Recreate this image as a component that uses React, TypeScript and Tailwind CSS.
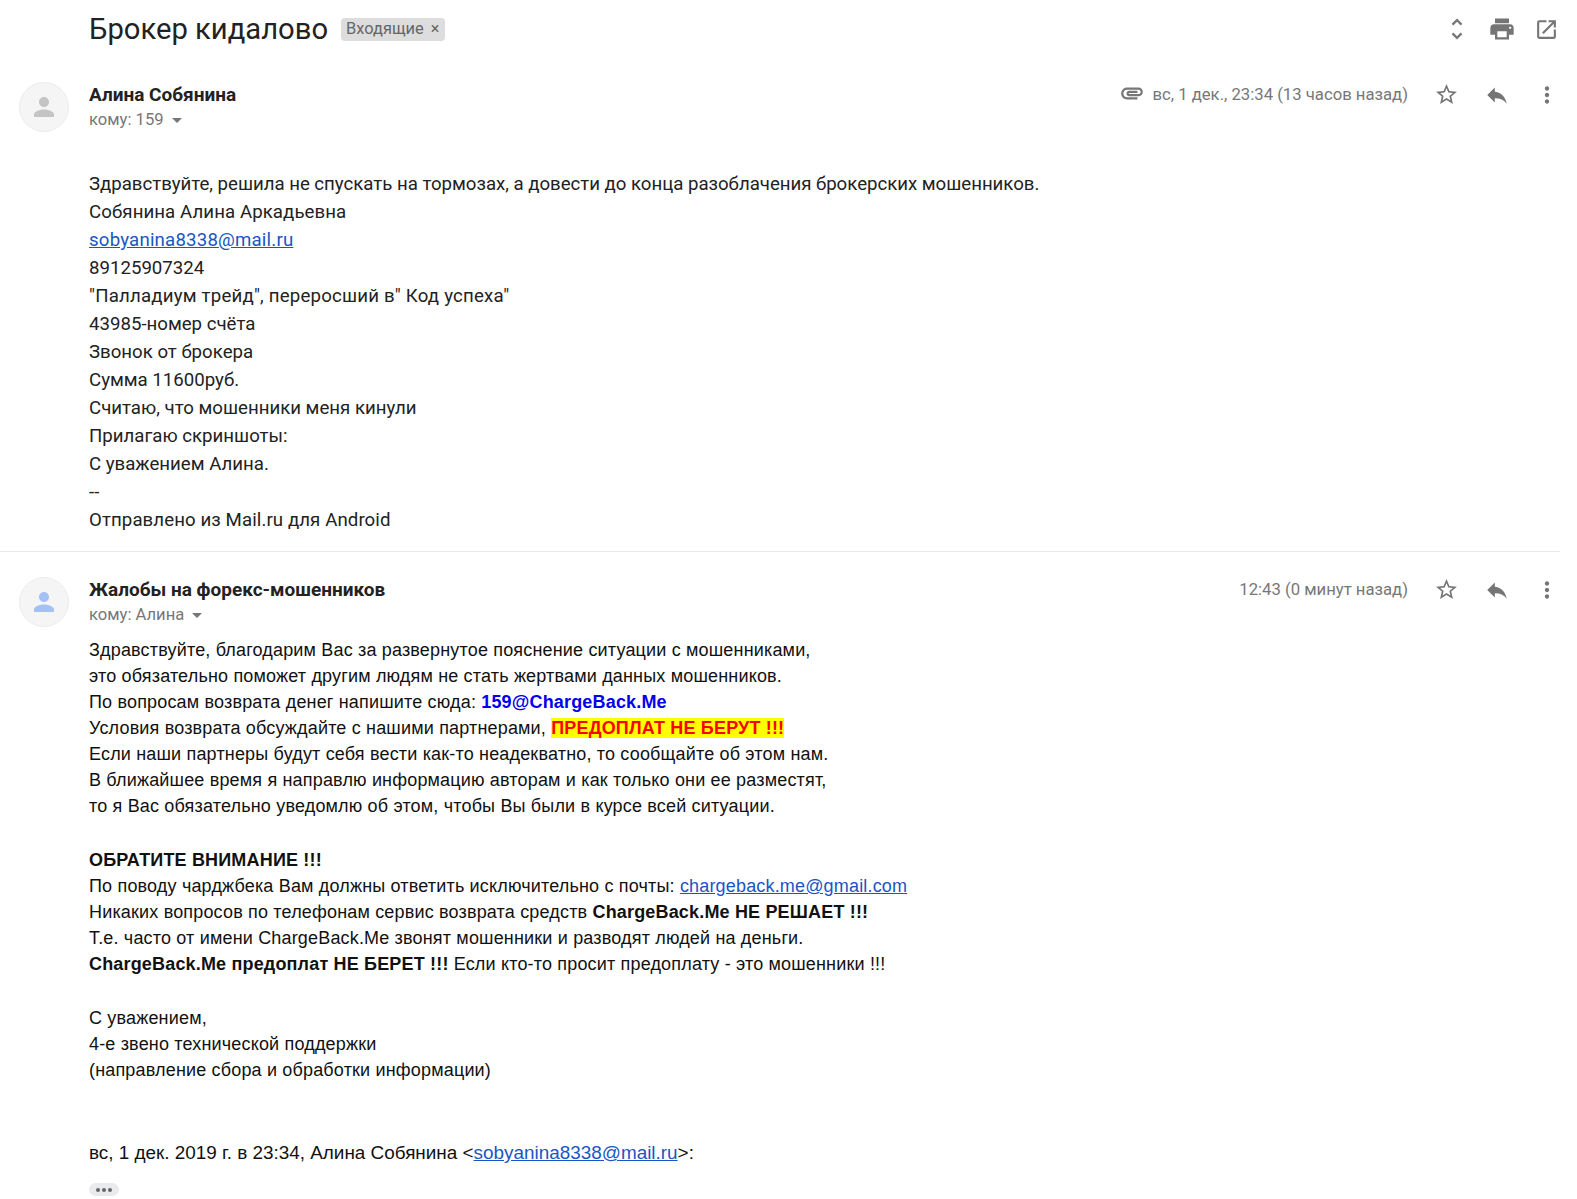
import React from "react";
import {
  MdArrowDropDown,
  MdAttachment,
  MdMoreVert,
  MdOpenInNew,
  MdPerson,
  MdPrint,
  MdReply,
  MdStarBorder,
  MdUnfoldMore,
} from "react-icons/md";

const roboto = "font-['Roboto',sans-serif]";
const arial = "font-['Liberation_Sans',Arial,sans-serif]";

type HeaderProps = {
  sender: string;
  to: string;
  time: string;
  avatarColor: string;
  attachment?: boolean;
};

const MessageHeader: React.FC<HeaderProps> = ({ sender, to, time, avatarColor, attachment }) => (
  <div className="flex h-[52px] items-start">
    <div className="ml-[19px] mr-[20px] flex h-[50px] w-[50px] items-center justify-center rounded-full border border-[#ececec] bg-[#f5f5f5]">
      <MdPerson className={`h-[30px] w-[30px] ${avatarColor}`} />
    </div>
    <div className="flex-1 pt-[1px]">
      <div className={`text-[19px] leading-[24px] font-bold text-[#222] ${roboto}`}>{sender}</div>
      <div className="mt-[1px] flex items-center text-[16.6px] leading-[24px] text-[#777]">
        <span>{to}</span>
        <MdArrowDropDown className="ml-[1px] h-[24px] w-[24px] text-[#777]" />
      </div>
    </div>
    <div className="flex h-[26px] items-center pr-[17px]">
      {attachment && <MdAttachment className="mr-[7px] mb-[5px] h-[26px] w-[26px] text-[#777]" />}
      <span className="text-[16.7px] text-[#777]">{time}</span>
      <MdStarBorder className="mb-[1px] ml-[26px] h-[25px] w-[25px] text-[#757575]" />
      <MdReply className="ml-[25px] h-[26px] w-[26px] text-[#757575]" />
      <MdMoreVert className="ml-[24px] h-[26px] w-[26px] text-[#757575]" />
    </div>
  </div>
);

const App: React.FC = () => {
  return (
    <div className={`h-[1199px] w-[1577px] overflow-hidden bg-white ${roboto}`}>
      {/* subject row */}
      <div className="flex h-[57px] items-center pt-[1px] pr-[18px] pl-[89px]">
        <h1 className="pt-[1px] text-[29.2px] font-normal text-[#222]">Брокер кидалово</h1>
        <span className="ml-[13px] flex h-[23px] items-center rounded-[4px] bg-[#ddd] px-[5px] text-[16.4px] text-[#666]">
          Входящие
          <span className="mr-[1px] ml-[7px] text-[16px]">×</span>
        </span>
        <div className="ml-auto flex items-center">
          <MdUnfoldMore className="h-[28px] w-[28px] text-[#777]" />
          <MdPrint className="ml-[17px] h-[28px] w-[28px] text-[#757575]" />
          <MdOpenInNew className="ml-[18px] h-[25px] w-[25px] text-[#757575]" />
        </div>
      </div>

      {/* first message */}
      <div className="mt-[25px] pb-[17px]">
        <MessageHeader
          sender="Алина Собянина"
          to="кому: 159"
          time="вс, 1 дек., 23:34 (13 часов назад)"
          avatarColor="text-[#c4c4c4]"
          attachment
        />
        <div className="mt-[36px] pl-[89px] text-[18.65px] leading-[28px] text-[#222]">
          <p className="tracking-[-0.02px]">
            Здравствуйте, решила не спускать на тормозах, а довести до конца разоблачения брокерских мошенников.
          </p>
          <p className="tracking-[0.08px]">Собянина Алина Аркадьевна</p>
          <p className="tracking-[0.19px] text-[#1a55c4] underline">sobyanina8338@mail.ru</p>
          <p>89125907324</p>
          <p className="tracking-[0.2px]">"Палладиум трейд", переросший в" Код успеха"</p>
          <p>43985-номер счёта</p>
          <p>Звонок от брокера</p>
          <p>Сумма 11600руб.</p>
          <p>Считаю, что мошенники меня кинули</p>
          <p>Прилагаю скриншоты:</p>
          <p>С уважением Алина.</p>
          <p>--</p>
          <p className="tracking-[0.09px]">Отправлено из Mail.ru для Android</p>
        </div>
      </div>
      <div className="mr-[17px] border-b border-[#e8e8e8]" />

      {/* reply */}
      <div className="pt-[25px]">
        <MessageHeader
          sender="Жалобы на форекс-мошенников"
          to="кому: Алина"
          time="12:43 (0 минут назад)"
          avatarColor="text-[#a3c1f4]"
        />
        <div className={`mt-[8px] pl-[89px] text-[18px] leading-[26px] tracking-[0.17px] text-[#111] ${arial}`}>
          <p>Здравствуйте, благодарим Вас за развернутое пояснение ситуации с мошенниками,</p>
          <p>это обязательно поможет другим людям не стать жертвами данных мошенников.</p>
          <p>
            По вопросам возврата денег напишите сюда: <b className="text-[#0000ee]">159@ChargeBack.Me</b>
          </p>
          <p>
            Условия возврата обсуждайте с нашими партнерами,{" "}
            <b className="bg-[#ffff00] text-[#ff0000]">ПРЕДОПЛАТ НЕ БЕРУТ !!!</b>
          </p>
          <p>Если наши партнеры будут себя вести как-то неадекватно, то сообщайте об этом нам.</p>
          <p>В ближайшее время я направлю информацию авторам и как только они ее разместят,</p>
          <p>то я Вас обязательно уведомлю об этом, чтобы Вы были в курсе всей ситуации.</p>
          <p className="h-[28px]">&nbsp;</p>
          <p>
            <b>ОБРАТИТЕ ВНИМАНИЕ !!!</b>
          </p>
          <p>
            По поводу чарджбека Вам должны ответить исключительно с почты:{" "}
            <span className="text-[#1a55c4] underline">chargeback.me@gmail.com</span>
          </p>
          <p>
            Никаких вопросов по телефонам сервис возврата средств <b>ChargeBack.Me НЕ РЕШАЕТ !!!</b>
          </p>
          <p>Т.е. часто от имени ChargeBack.Me звонят мошенники и разводят людей на деньги.</p>
          <p>
            <b>ChargeBack.Me предоплат НЕ БЕРЕТ !!!</b> Если кто-то просит предоплату - это мошенники !!!
          </p>
          <p className="h-[28px]">&nbsp;</p>
          <p>С уважением,</p>
          <p>4-е звено технической поддержки</p>
          <p>(направление сбора и обработки информации)</p>
          <p className="mt-[57px] text-[18.9px] tracking-normal">
            вс, 1 дек. 2019 г. в 23:34, Алина Собянина &lt;
            <span className="text-[#1a55c4] underline">sobyanina8338@mail.ru</span>&gt;:
          </p>
          <div className="mt-[17px] flex h-[13px] w-[30px] items-center justify-center gap-[2px] rounded-full bg-[#e8eaed]">
            <span className="h-[4px] w-[4px] rounded-full bg-[#666]" />
            <span className="h-[4px] w-[4px] rounded-full bg-[#666]" />
            <span className="h-[4px] w-[4px] rounded-full bg-[#666]" />
          </div>
        </div>
      </div>
    </div>
  );
};

export default App;
